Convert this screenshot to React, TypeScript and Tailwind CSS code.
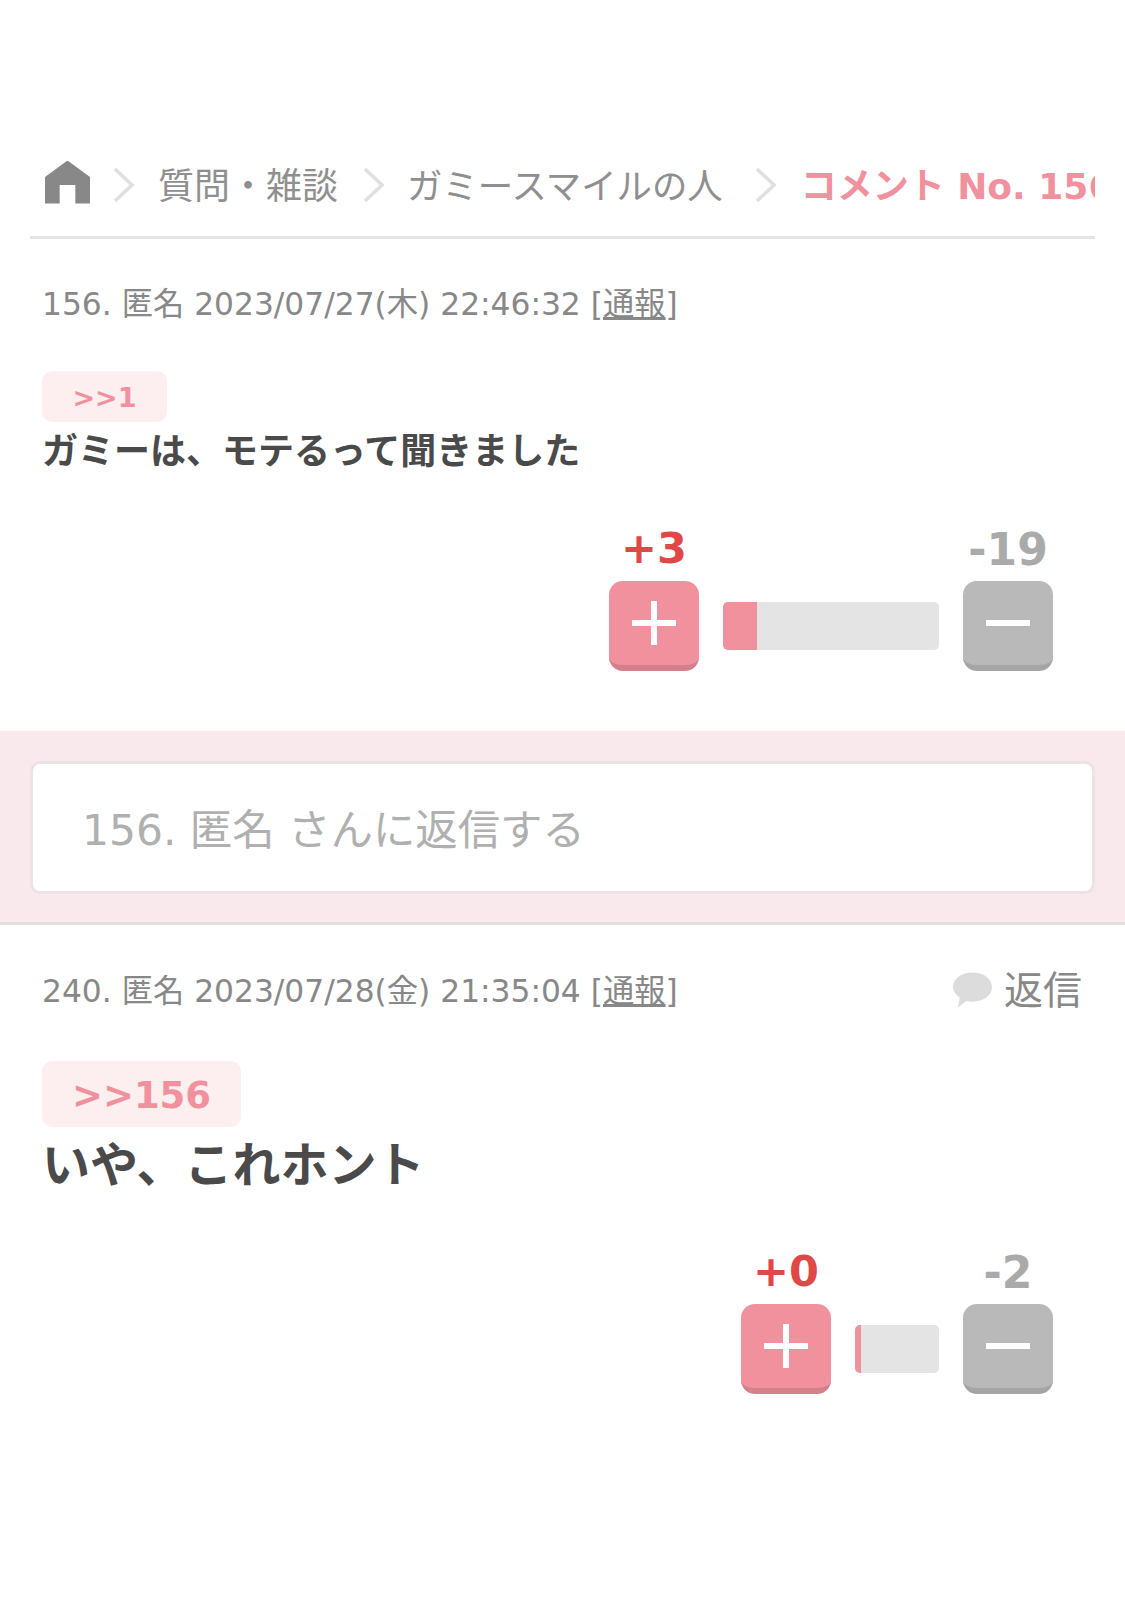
import React from 'react';

const Chevron = ({ className }: { className?: string }) => (
  <svg viewBox="0 0 24 36" className={className} fill="none" stroke="#e0e0e0" strokeWidth="3.5">
    <path d="M3 2 L20 18 L3 34" />
  </svg>
);

const HomeIcon = () => (
  <svg viewBox="0 0 46 44" className="w-[45px] h-[44px] shrink-0 -mt-[1px]" fill="#888888">
    <path d="M23 0 L46 17 V44 H31 V25 H15 V44 H0 V17 Z" />
  </svg>
);

const Vote = ({ plus, minus, track, fill }: { plus: string; minus: string; track: number; fill: number }) => (
  <div className="flex justify-end pr-[72px]">
    <div className="flex flex-col items-center w-[90px]">
      <div className="h-[44px] text-[43px] leading-[44px] font-bold text-[#e04848]">{plus}</div>
      <button className="mt-[11px] w-[90px] h-[90px] rounded-[14px] bg-[#f0919d] border-b-[6px] border-[#d4808b] flex items-center justify-center">
        <svg viewBox="0 0 44 44" className="w-[44px] h-[44px]" fill="#fff">
          <rect x="19" width="6" height="44" />
          <rect y="19" width="44" height="6" />
        </svg>
      </button>
    </div>
    <div className="self-end mb-[21px] ml-[24px] mr-[24px] h-[48px] rounded-[5px] bg-[#e4e4e4] overflow-hidden" style={{ width: track }}>
      <div className="h-full bg-[#f0919d]" style={{ width: fill }} />
    </div>
    <div className="flex flex-col items-center w-[90px]">
      <div className="h-[44px] text-[44px] leading-[47px] font-bold text-[#aaaaaa]">{minus}</div>
      <button className="mt-[11px] w-[90px] h-[90px] rounded-[14px] bg-[#b9b9b9] border-b-[6px] border-[#a5a5a5] flex items-center justify-center">
        <svg viewBox="0 0 44 6" className="w-[44px] h-[6px]" fill="#fff"><rect width="44" height="6" /></svg>
      </button>
    </div>
  </div>
);

export default function App() {
  return (
    <div className="w-[1125px] h-[1605px] bg-white overflow-hidden font-['DejaVu_Sans','Noto_Sans_CJK_JP',sans-serif] text-[#888888]">
      <nav className="mt-[161px] mx-[30px] h-[78px] border-b-[3px] border-[#e4e4e4] flex items-start pl-[15px] overflow-hidden whitespace-nowrap">
        <HomeIcon />
        <Chevron className="w-[24px] h-[36px] ml-[22px] mt-[6px] shrink-0" />
        <span className="ml-[22px] text-[36px] leading-[52px] text-[#8f8f8f]">質問・雑談</span>
        <Chevron className="w-[24px] h-[36px] ml-[24px] mt-[6px] shrink-0" />
        <span className="ml-[21px] text-[35.4px] leading-[52px] text-[#8f8f8f]">ガミースマイルの人</span>
        <Chevron className="w-[24px] h-[36px] ml-[31px] mt-[6px] shrink-0" />
        <span className="ml-[23px] text-[36px] leading-[52px] font-bold text-[#f0919d]">コメント No. 156</span>
      </nav>

      <section className="px-[42px] pt-[46px]">
        <p className="text-[31.3px] leading-[38px]">156. 匿名 2023/07/27(木) 22:46:32 [<span className="underline">通報</span>]</p>
        <div className="mt-[48px] w-[125px] h-[51px] rounded-[10px] bg-[#fdeef0] pt-[4px] flex items-center justify-center text-[27px] font-bold text-[#f0919d]">&gt;&gt;1</div>
        <p className="mt-[5px] text-[36px] leading-[50px] font-bold text-[#4a4a4a]">ガミーは、モテるって聞きました</p>
      </section>
      <div className="mt-[49px]">
        <Vote plus="+3" minus="-19" track={216} fill={34} />
      </div>

      <div className="mt-[60px] h-[194px] bg-[#f9e9ec] border-b-[3px] border-[#e2dde0] px-[30px] pt-[30px]">
        <div className="h-[133px] rounded-[10px] bg-white border-[3px] border-[#ebe3e6] pl-[49px] pt-[6px] flex items-center text-[42.4px] text-[#b0b0b0]">156. 匿名 さんに返信する</div>
      </div>

      <section className="pl-[42px] pr-[43px] pt-[41px]">
        <div className="flex justify-between items-center">
          <p className="text-[31.3px] leading-[38px]">240. 匿名 2023/07/28(金) 21:35:04 [<span className="underline">通報</span>]</p>
          <div className="flex items-center">
            <svg viewBox="0 0 40 36" className="w-[39px] h-[36px] -mt-[3px]" fill="#dcdcdc"><path d="M20 0C31 0 40 6 40 15S31 30 20 30C18 30 16 30 14 29L5 36 7 26C3 23 0 19 0 15 0 6 9 0 20 0Z" /></svg>
            <span className="ml-[12px] text-[39px] leading-[50px]">返信</span>
          </div>
        </div>
        <div className="mt-[45px] w-[199px] h-[66px] rounded-[10px] bg-[#fdeef0] pt-[3px] flex items-center justify-center text-[37px] font-bold text-[#f0919d]">&gt;&gt;156</div>
        <p className="mt-[6px] text-[48px] leading-[64px] font-bold text-[#4a4a4a]">いや、これホント</p>
      </section>
      <div className="mt-[52px]">
        <Vote plus="+0" minus="-2" track={84} fill={6} />
      </div>
    </div>
  );
}
